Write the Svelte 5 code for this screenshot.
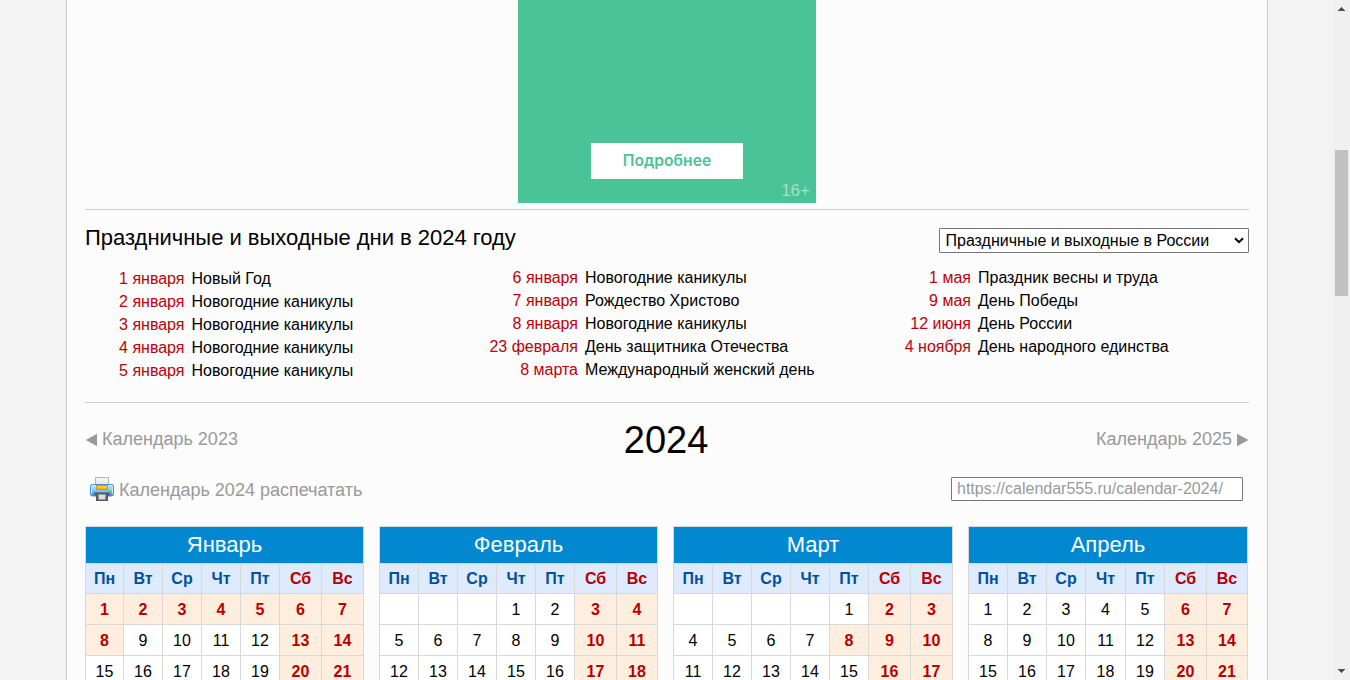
<script>
  const holidays = [
    [
      ['1 января', 'Новый Год'],
      ['2 января', 'Новогодние каникулы'],
      ['3 января', 'Новогодние каникулы'],
      ['4 января', 'Новогодние каникулы'],
      ['5 января', 'Новогодние каникулы']
    ],
    [
      ['6 января', 'Новогодние каникулы'],
      ['7 января', 'Рождество Христово'],
      ['8 января', 'Новогодние каникулы'],
      ['23 февраля', 'День защитника Отечества'],
      ['8 марта', 'Международный женский день']
    ],
    [
      ['1 мая', 'Праздник весны и труда'],
      ['9 мая', 'День Победы'],
      ['12 июня', 'День России'],
      ['4 ноября', 'День народного единства']
    ]
  ];
  const weekdays = ['Пн', 'Вт', 'Ср', 'Чт', 'Пт', 'Сб', 'Вс'];
  const months = [
    { name: 'Январь', offset: 0, off: [1, 2, 3, 4, 5, 8] },
    { name: 'Февраль', offset: 3, off: [] },
    { name: 'Март', offset: 4, off: [8] },
    { name: 'Апрель', offset: 0, off: [] }
  ].map((m) => ({
    ...m,
    days: Array.from({ length: 21 }, (_, i) => {
      const day = i - m.offset + 1;
      return { day: day > 0 ? day : '', red: day > 0 && (i % 7 > 4 || m.off.includes(day)) };
    })
  }));
</script>

<div class="window">
  <main>
    <section class="ad">
      <div class="banner">
        <span class="more">Подробнее</span>
        <span class="age">16+</span>
      </div>
    </section>

    <section class="holidays">
      <header>
        <h2>Праздничные и выходные дни в 2024 году</h2>
        <div class="select">
          <span>Праздничные и выходные в России</span>
          <svg width="10" height="7" viewBox="0 0 10 7"><path d="M1 1.2 5 5.2 9 1.2" fill="none" stroke="#000" stroke-width="2" /></svg>
        </div>
      </header>
      <div class="lists">
        {#each holidays as list}
          <dl>
            {#each list as [date, title]}
              <dt>{date}</dt>
              <dd>{title}</dd>
            {/each}
          </dl>
        {/each}
      </div>
    </section>

    <nav class="years">
      <span class="link">
        <svg width="12" height="14" viewBox="0 0 12 14"><path d="M0.8 7 12 0.8V13.2Z" fill="#999" /></svg>
        <span>Календарь 2023</span>
      </span>
      <h1>2024</h1>
      <span class="link next">
        <span>Календарь 2025</span>
        <svg width="12" height="14" viewBox="0 0 12 14"><path d="M11.5 7 0 0.8V13.2Z" fill="#999" /></svg>
      </span>
    </nav>

    <div class="tools">
      <span class="print">
        <svg width="24" height="24" viewBox="0 0 24 24">
          <defs>
            <linearGradient id="body" x1="0" y1="0" x2="0" y2="1">
              <stop offset="0" stop-color="#b9e9ff" /><stop offset=".45" stop-color="#8fd0fa" /><stop offset="1" stop-color="#3389d6" />
            </linearGradient>
            <linearGradient id="tray" x1="0" y1="0" x2="0" y2="1">
              <stop offset="0" stop-color="#ffe24a" /><stop offset="1" stop-color="#f5a800" />
            </linearGradient>
            <linearGradient id="sheet" x1="0" y1="0" x2="0" y2="1">
              <stop offset="0" stop-color="#fafafa" /><stop offset="1" stop-color="#dedfe3" />
            </linearGradient>
          </defs>
          <rect x="5.5" y="0.5" width="13" height="9" fill="url(#sheet)" stroke="#b5b5b9" />
          <rect x="0.5" y="7.5" width="23" height="11.5" rx="2" fill="url(#body)" stroke="#3b94dc" />
          <path d="M2 8.5H22" stroke="#d7f4ff" />
          <path d="M1.5 10V17M22.5 10V17" stroke="#c4edff" />
          <rect x="6.5" y="8.5" width="11" height="4" fill="url(#tray)" stroke="#d99018" />
          <rect x="19" y="13.5" width="2" height="1.5" fill="#e59500" />
          <path d="M4.5 15.5H19.5V18.5H18V24H6V18.5H4.5Z" fill="#58595c" />
          <rect x="8.5" y="17" width="7" height="5.5" fill="#dcdcde" />
          <path d="M8.5 17.5H15.5" stroke="#999" />
        </svg>
        <span>Календарь 2024 распечатать</span>
      </span>
      <span class="url">https://calendar555.ru/calendar-2024/</span>
    </div>

    <div class="months">
      {#each months as month}
        <div class="month">
          <div class="name">{month.name}</div>
          {#each weekdays as w, i}
            <div class="weekday" class:weekend={i > 4}>{w}</div>
          {/each}
          {#each month.days as d}
            <div class="day" class:red={d.red}>{d.day}</div>
          {/each}
        </div>
      {/each}
    </div>
  </main>

  <div class="scrollbar">
    <svg width="7" height="4" viewBox="0 0 7 4" shape-rendering="crispEdges"><path d="M3 0h1v1h1v1h1v1h1v1H0V3h1V2h1V1h1z" fill="#505050" /></svg>
    <div class="thumb"></div>
    <svg class="down" width="7" height="4" viewBox="0 0 7 4" shape-rendering="crispEdges"><path d="M0 0h7v1H6v1H5v1H4v1H3V3H2V2H1V1H0z" fill="#505050" /></svg>
  </div>
</div>

<style>
  :global(body) {
    overflow: hidden;
  }
  .window {
    display: flex;
    justify-content: space-between;
    height: 680px;
    overflow: hidden;
    background: #f3f3f3;
    font-family: 'Liberation Sans', Arial, sans-serif;
    font-size: 16px;
    color: #000;
    white-space: nowrap;
  }
  main {
    box-sizing: border-box;
    width: 1202px;
    height: 680px;
    margin-left: 66px;
    padding: 0 18px;
    border: solid #ccc;
    border-width: 0 1px;
    background: #fcfcfc;
    overflow: hidden;
  }
  h1,
  h2,
  dl,
  dd {
    margin: 0;
    font-weight: normal;
  }
  .ad {
    height: 209px;
    border-bottom: 1px solid #ccc;
  }
  .banner {
    position: relative;
    box-sizing: border-box;
    width: 298px;
    height: 203px;
    margin-left: 433px;
    padding: 143px 73px 0;
    background: #49c397;
  }
  .more {
    display: block;
    height: 36px;
    line-height: 35px;
    background: #fff;
    color: #49c397;
    font-family: Inter, sans-serif;
    font-weight: 600;
    font-size: 15.7px;
    text-align: center;
  }
  .age {
    position: absolute;
    right: 6px;
    bottom: 2px;
    line-height: 20px;
    color: #a4e1cb;
    font-size: 17px;
  }
  .holidays {
    height: 192px;
    border-bottom: 1px solid #ccc;
  }
  .holidays header {
    display: flex;
    justify-content: space-between;
    height: 56px;
  }
  h2 {
    padding-top: 15px;
    font-size: 22px;
    line-height: 26px;
    letter-spacing: -0.02px;
  }
  .select {
    display: flex;
    align-items: center;
    justify-content: space-between;
    box-sizing: border-box;
    width: 310px;
    height: 25px;
    margin-top: 18px;
    padding: 0 4px 0 5.5px;
    border: 1px solid #767676;
    border-radius: 1px;
    background: #fff;
  }
  .lists {
    display: grid;
    grid-template-columns: 399px 394px 371px;
  }
  dl {
    display: grid;
    grid-template-columns: 99.5px 1fr;
    column-gap: 7px;
    grid-auto-rows: 23px;
    line-height: 23px;
  }
  dl:first-child {
    padding-top: 1px;
  }
  dl:nth-child(2) {
    grid-template-columns: 94px 1fr;
  }
  dl:nth-child(3) {
    grid-template-columns: 93px 1fr;
  }
  dt {
    color: #c00008;
    text-align: right;
  }
  .years {
    display: grid;
    grid-template-columns: 1fr 84.5px 1fr;
    align-items: center;
    height: 74px;
    color: #999;
    font-size: 18px;
  }
  .years h1 {
    color: #000;
    font-size: 38px;
    line-height: 44px;
    margin-left: -1px;
  }
  .link {
    display: flex;
    align-items: center;
    gap: 5px;
    padding-bottom: 2px;
  }
  .link svg {
    margin-top: 2px;
  }
  .next {
    justify-content: flex-end;
  }
  .tools {
    display: flex;
    justify-content: space-between;
    height: 49px;
    padding: 0 6px 0 5px;
    color: #999;
  }
  .print {
    display: flex;
    gap: 5px;
    font-size: 18px;
    line-height: 26px;
  }
  .print svg {
    display: block;
  }
  .url {
    box-sizing: border-box;
    width: 292px;
    height: 24px;
    padding-left: 5px;
    border: 1px solid #767676;
    border-radius: 1px;
    background: #fff;
    line-height: 22px;
  }
  .months {
    display: flex;
    gap: 15px;
  }
  .month {
    display: grid;
    flex: none;
    grid-template-columns: repeat(5, 38px) 41px 40px;
    grid-template-rows: 36px 29px repeat(3, 30px);
    gap: 1px;
    padding: 1px;
    background: #d8d8d8;
    text-align: center;
  }
  .month:first-child {
    grid-template-columns: 37px repeat(4, 38px) 41px 41px;
  }
  .month:nth-child(3) {
    grid-template-columns: repeat(5, 38px) 41px 41px;
  }
  .month:nth-child(4) {
    grid-template-columns: repeat(3, 38px) 39px 38px 41px 40px;
  }
  .name {
    grid-column: 1 / -1;
    background: #0288d1;
    color: #fff;
    font-size: 22px;
    line-height: 36px;
  }
  .weekday {
    background: #deebff;
    color: #0150a0;
    font-weight: bold;
    line-height: 29px;
  }
  .weekend {
    color: #b80000;
  }
  .day {
    background: #fff;
    line-height: 31px;
  }
  .red {
    background: #ffeedd;
    color: #b80000;
    font-weight: bold;
  }
  .scrollbar {
    display: flex;
    flex-direction: column;
    align-items: center;
    box-sizing: border-box;
    width: 17px;
    padding: 7px 0;
    background: #f0f0f0;
  }
  .thumb {
    width: 13px;
    height: 146px;
    margin-top: 139px;
    background: #c1c1c1;
  }
  .down {
    margin-top: auto;
  }
</style>
